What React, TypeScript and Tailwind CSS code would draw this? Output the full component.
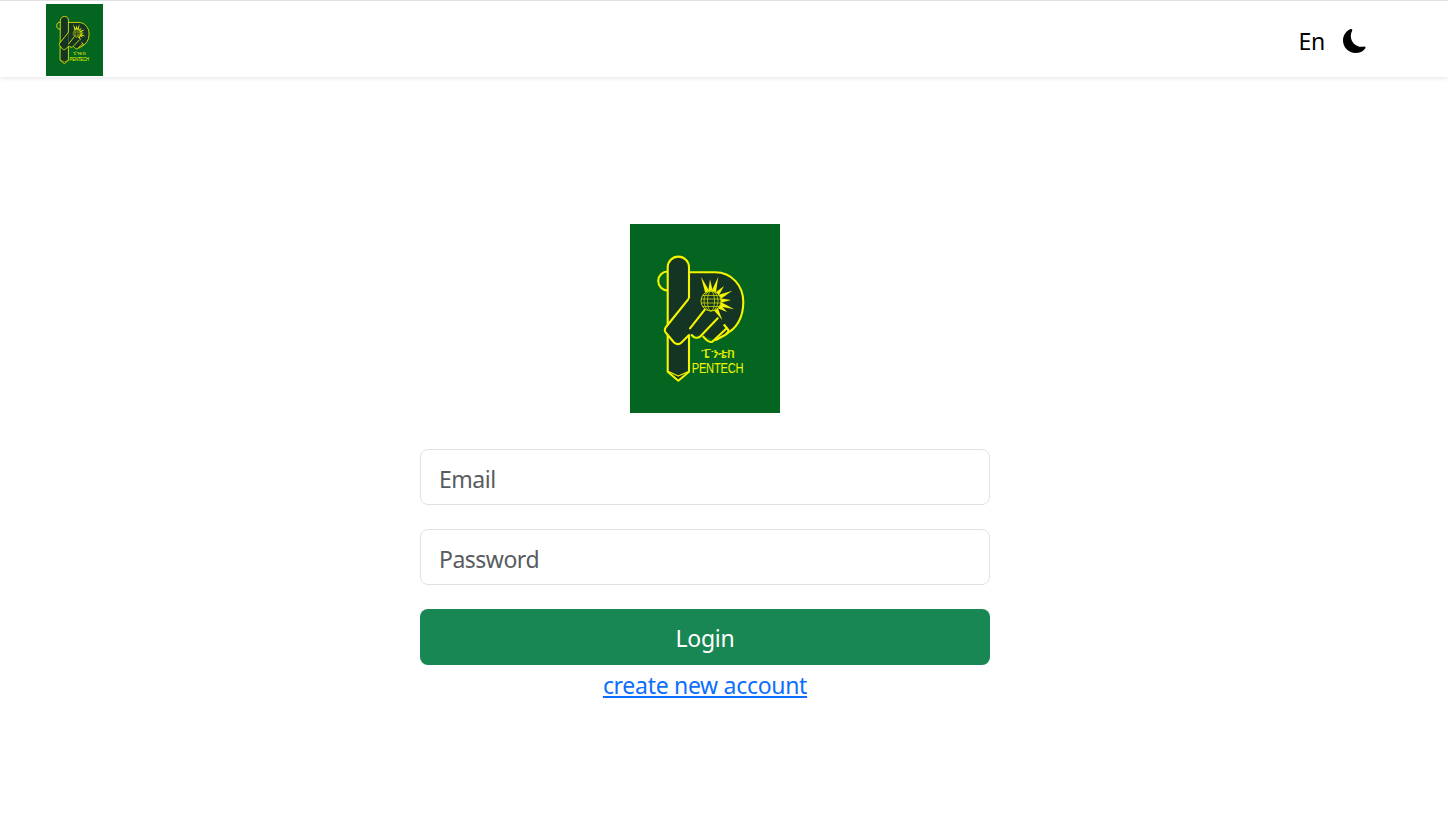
import React from 'react';
import { BsMoonFill } from 'react-icons/bs';

const rayTips = [
  [71, 52.7],
  [80, 55.3],
  [88.3, 52.7],
  [94, 62],
  [102.3, 66.7],
  [101, 76],
  [104.3, 85.3],
  [97, 88],
  [92.3, 96],
];

const Logo: React.FC<{ className: string }> = ({ className }) => (
  <svg viewBox="0 0 150 189" preserveAspectRatio="none" className={className}>
    <rect width="150" height="189" fill="#03651f" />
    {/* dark inside of the bowl, no outline on the closing edge */}
    <path d="M59 48.3H85C102 48.3 113.3 62 113.3 78C113.3 94 106 105 96.7 109.3L85.7 116L73 112L59 111Z" fill="#143524" />
    <g stroke="#f5f500" strokeWidth="2.1" strokeLinejoin="round" strokeLinecap="round" fill="none">
      <path d="M59 48.3H85C102 48.3 113.3 62 113.3 78C113.3 94 106 105 96.7 109.3" />
      {/* knob on the left */}
      <path d="M37.7 47.5A9.5 9.5 0 0 0 37.7 66.5" />
      {/* pen */}
      <path d="M37.7 43.3A10.6 10.6 0 0 1 59 43.3V147.7L48.3 156.7L37.7 147.7Z" fill="#143524" />
      <path d="M38.5 147.5L48.3 152L58.5 147.5" strokeWidth="1.2" />
      {/* hand */}
      <path d="M59 74.3L36 103C34.5 105 34.5 107.5 36.5 109.5L44 118.5C46.5 120.5 49.5 120.5 51.5 118.5L59 111" fill="#143524" />
      <path d="M59 74.3V111L75 85.3Z" fill="#143524" stroke="none" />
      <path d="M60 104.3L75 85.3" />
      <path d="M61.7 111C64 114 67.5 114.5 70 112.7L87.7 94.3" />
      <path d="M73.3 112.7C76 116 79.5 119 82.3 117.7L96.7 104.3" />
      <path d="M85.7 116L95 111C97.5 109.5 99 108 98.3 106L94.3 101" />
    </g>
    {/* sun rays */}
    {rayTips.map(([x, y]) => {
      const dx = x - 81;
      const dy = y - 77;
      const len = Math.hypot(dx, dy);
      const bx = 81 + (dx / len) * 9;
      const by = 77 + (dy / len) * 9;
      const nx = (-dy / len) * 2.4;
      const ny = (dx / len) * 2.4;
      return (
        <polygon
          key={`${x}-${y}`}
          points={`${x},${y} ${bx + nx},${by + ny} ${bx - nx},${by - ny}`}
          fill="#f5f500"
        />
      );
    })}
    {/* globe */}
    <circle cx="81" cy="77" r="10" fill="#143524" stroke="#c8d400" strokeWidth="1" />
    <g fill="none" stroke="#c8d400" strokeWidth="0.8">
      <ellipse cx="81" cy="77" rx="3.5" ry="10" />
      <ellipse cx="81" cy="77" rx="7" ry="10" />
      <path d="M72.5 71.5H89.5M71 75H91M71 79H91M72.5 82.5H89.5" />
    </g>
    <text x="71" y="134" fill="#e8ee00" fontSize="14" textLength="34" lengthAdjust="spacingAndGlyphs" fontFamily="'DejaVu Sans', sans-serif" fontWeight="300">ፔንቴክ</text>
    <text x="61.7" y="149" fill="#f5f500" fontSize="15" textLength="51.6" lengthAdjust="spacingAndGlyphs" fontFamily="'Liberation Sans', sans-serif">PENTECH</text>
  </svg>
);

export default function App() {
  return (
    <div className="min-h-[839px] bg-white font-['Noto_Sans','Open_Sans',sans-serif] text-[23px] tracking-[-0.3px]">
      <nav className="flex h-[77px] items-center justify-between border-t border-[#dee2e6] pl-[46px] pr-[81px] pt-[2px] shadow-[0_2px_4px_rgba(0,0,0,0.08)]">
        <Logo className="h-[72px] w-[57px]" />
        <div className="mt-[2px] flex items-center gap-[18px]">
          <span className="text-black">En</span>
          <BsMoonFill className="h-6 w-6 text-black" />
        </div>
      </nav>

      <main className="ml-[420px] flex w-[570px] flex-col items-center pt-[147px]">
        <Logo className="mb-9 h-[189px] w-[150px]" />
        <form className="flex w-full flex-col gap-6">
          <input
            placeholder="Email"
            className="h-14 rounded-lg border border-[#dee2e6] bg-white px-[18px] pt-1 tracking-[-0.5px] outline-none placeholder:text-[#595c5f]"
          />
          <input
            placeholder="Password"
            className="h-14 rounded-lg border border-[#dee2e6] bg-white px-[18px] pt-1 tracking-[-0.5px] outline-none placeholder:text-[#595c5f]"
          />
          <button type="button" className="h-14 rounded-lg bg-[#198754] pt-[3px] text-white">
            Login
          </button>
        </form>
        <a href="#" className="mt-[3px] text-[#0d6efd] underline">
          create new account
        </a>
      </main>
    </div>
  );
}
